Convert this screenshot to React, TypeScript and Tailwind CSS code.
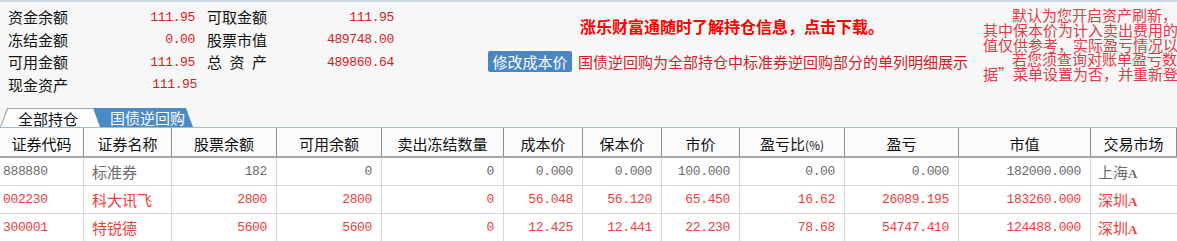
import React from "react";

const CJK = { fontFamily: '"Noto Sans CJK SC", "Noto Sans", sans-serif' };
const MONO = { fontFamily: '"Liberation Mono", monospace', letterSpacing: "-0.35px" };

type Col = { w: number; h: string; align: "left" | "right" };
const cols: Col[] = [
  { w: 84, h: "证券代码", align: "left" },
  { w: 88, h: "证券名称", align: "left" },
  { w: 105, h: "股票余额", align: "right" },
  { w: 105, h: "可用余额", align: "right" },
  { w: 122, h: "卖出冻结数量", align: "right" },
  { w: 79, h: "成本价", align: "right" },
  { w: 79, h: "保本价", align: "right" },
  { w: 78, h: "市价", align: "right" },
  { w: 105, h: "盈亏比(%)", align: "right" },
  { w: 114, h: "盈亏", align: "right" },
  { w: 132, h: "市值", align: "right" },
  { w: 86, h: "交易市场", align: "left" },
];

const rows: { c: string; d: string[] }[] = [
  { c: "text-[#6b6b6b]", d: ["888880", "标准券", "182", "0", "0", "0.000", "0.000", "100.000", "0.00", "0.000", "182000.000", "上海"] },
  { c: "text-[#f03c3c]", d: ["002230", "科大讯飞", "2800", "2800", "0", "56.048", "56.120", "65.450", "16.62", "26089.195", "183260.000", "深圳"] },
  { c: "text-[#f03c3c]", d: ["300001", "特锐德", "5600", "5600", "0", "12.425", "12.441", "22.230", "78.68", "54747.410", "124488.000", "深圳"] },
];

function InfoLabel({ t, spread }: { t: string; spread?: boolean }) {
  if (spread) {
    return (
      <div className="flex justify-between w-[60px] text-[15px] text-[#111]" style={CJK}>
        {t.split("").map((ch, i) => (
          <span key={i}>{ch}</span>
        ))}
      </div>
    );
  }
  return (
    <div className="text-[15px] text-[#111] whitespace-nowrap" style={CJK}>
      {t}
    </div>
  );
}

function InfoVal({ v, extra }: { v: string; extra?: string }) {
  return (
    <div className={`text-right text-[13px] text-[#d41c1c] ${extra ?? ""}`} style={MONO}>
      {v}
    </div>
  );
}

export default function App() {
  return (
    <div className="w-[1177px] h-[241px] overflow-hidden bg-[#f7f7f7] border-t-2 border-[#cdd5de] flex flex-col" style={CJK}>
      {/* top section */}
      <div className="h-[106px] flex shrink-0">
        {/* left info */}
        <div className="w-[488px] pl-[8px] pt-[4px]">
          <div className="grid grid-cols-[60px_127px_72px_127px] auto-rows-[22.5px] items-center">
            <InfoLabel t="资金余额" />
            <InfoVal v="111.95" />
            <div className="pl-[12px]"><InfoLabel t="可取金额" /></div>
            <InfoVal v="111.95" />
            <InfoLabel t="冻结金额" />
            <InfoVal v="0.00" />
            <div className="pl-[12px]"><InfoLabel t="股票市值" /></div>
            <InfoVal v="489748.00" />
            <InfoLabel t="可用金额" />
            <InfoVal v="111.95" />
            <div className="pl-[12px]"><InfoLabel t="总资产" spread /></div>
            <InfoVal v="489860.64" />
            <InfoLabel t="现金资产" />
            <InfoVal v="111.95" extra="pr-0 -mr-[2px]" />
          </div>
        </div>
        {/* middle */}
        <div className="w-[495px] flex flex-col">
          <div className="pl-[92px] pt-[15px] text-[16px] leading-[18px] font-bold text-[#ff0000] whitespace-nowrap">
            涨乐财富通随时了解持仓信息，点击下载。
          </div>
          <div className="flex items-center mt-[16px]">
            <div className="w-[84px] h-[21px] rounded-[2px] bg-[#4a87c2] text-white text-[15px] leading-[21px] text-center whitespace-nowrap">
              修改成本价
            </div>
            <div className="ml-[6px] text-[15px] leading-[20px] text-[#cf1f28] whitespace-nowrap">
              国债逆回购为全部持仓中标准券逆回购部分的单列明细展示
            </div>
          </div>
        </div>
        {/* right notes */}
        <div className="flex-1 overflow-hidden pt-[6px] text-[15px] leading-[14.8px] text-[#e23a46] whitespace-nowrap">
          <div className="pl-[29px]">默认为您开启资产刷新，持仓</div>
          <div>其中保本价为计入卖出费用的保本</div>
          <div>值仅供参考，实际盈亏情况以对账</div>
          <div className="pl-[29px]">若您须查询对账单盈亏数</div>
          <div>据”菜单设置为否，并重新登录</div>
        </div>
      </div>

      {/* tabs */}
      <div className="h-[19px] flex shrink-0 items-end">
        <div
          className="w-[100px] h-[19px] bg-[#98a6b4]"
          style={{ clipPath: "polygon(0 100%, 7px 0, 100% 0, 100% 100%)" }}
        >
          <div
            className="mt-[1px] h-[18px] bg-[#fdfdfd] text-[15px] leading-[19px] text-[#111] pl-[18px]"
            style={{ clipPath: "polygon(1px 100%, 8px 0, 100% 0, 100% 100%)" }}
          >
            全部持仓
          </div>
        </div>
        <div
          className="-ml-[7px] w-[100px] h-[19px] bg-[#4a8ac6] text-white text-[15px] leading-[19px] pl-[17px]"
          style={{ clipPath: "polygon(0 0, calc(100% - 7px) 0, 100% 100%, 7px 100%)" }}
        >
          国债逆回购
        </div>
      </div>

      {/* table */}
      <div className="flex-1 bg-white border-t border-[#a9bacb]">
        <div className="grid grid-cols-[84px_88px_105px_105px_122px_79px_79px_78px_105px_114px_132px_86px] h-[30px] bg-[#fbfbfb] border-b-2 border-[#a6a6a6]">
          {cols.map((c, i) => (
            <div
              key={i}
              className="border-r border-[#8d8d8d] shadow-[inset_1px_0_0_#ffffff] text-center text-[15px] leading-[20px] pt-[6px] text-[#111] whitespace-nowrap"
            >
              {c.h === "盈亏比(%)" ? (
                <span>
                  盈亏比<span className="text-[12px]">(%)</span>
                </span>
              ) : (
                c.h
              )}
            </div>
          ))}
        </div>
        {rows.map((r, ri) => (
          <div
            key={ri}
            className={`grid grid-cols-[84px_88px_105px_105px_122px_79px_79px_78px_105px_114px_132px_86px] h-[28px] border-b border-[#d9d9d9] ${r.c}`}
          >
            {r.d.map((v, ci) => {
              const col = cols[ci];
              const isCJK = ci === 1 || ci === 11;
              if (ci === 0) {
                return (
                  <div key={ci} className="border-r border-[#d6d6d6] pl-[3px] pt-[5px] text-[13px] leading-[18px]" style={MONO}>
                    {v}
                  </div>
                );
              }
              if (ci === 11) {
                return (
                  <div key={ci} className="pl-[7px] pt-[4px] text-[15px] leading-[20px] whitespace-nowrap" style={CJK}>
                    {v}
                    <span className="text-[13px] font-bold" style={{ fontFamily: '"Liberation Serif", serif' }}>A</span>
                  </div>
                );
              }
              if (isCJK) {
                return (
                  <div key={ci} className="border-r border-[#d6d6d6] pl-[8px] pt-[4px] text-[15px] leading-[20px] whitespace-nowrap" style={CJK}>
                    {v}
                  </div>
                );
              }
              return (
                <div
                  key={ci}
                  className={`border-r border-[#d6d6d6] pr-[9px] pt-[5px] text-[13px] leading-[18px] ${col.align === "right" ? "text-right" : "text-left"}`}
                  style={MONO}
                >
                  {v}
                </div>
              );
            })}
          </div>
        ))}
      </div>
    </div>
  );
}
